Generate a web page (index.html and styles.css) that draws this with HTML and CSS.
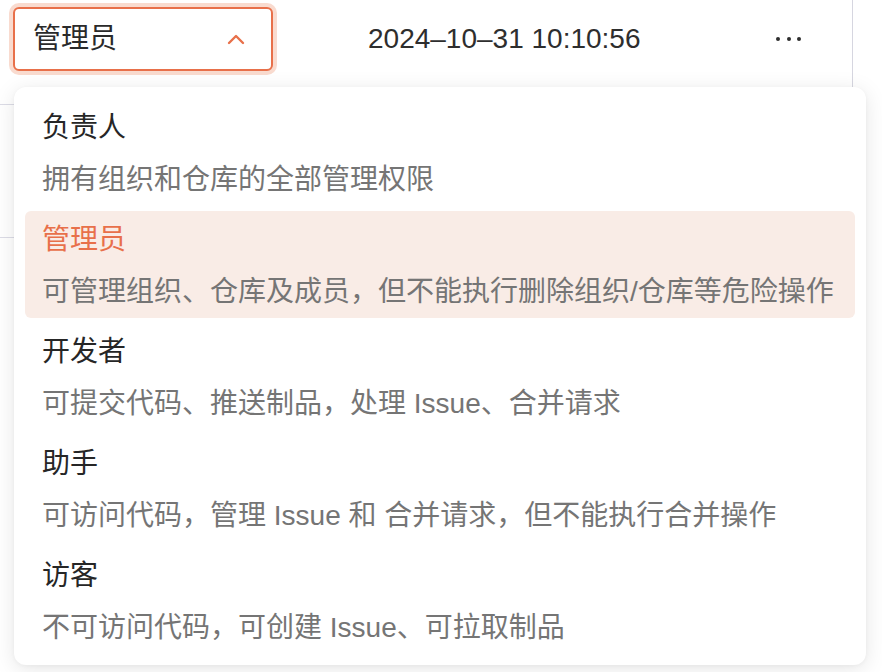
FILE: index.html
```html
<!DOCTYPE html>
<html lang="zh-CN">
<head>
<meta charset="utf-8">
<title>角色选择</title>
<link rel="stylesheet" href="styles.css">
</head>
<body>
<div class="page">
  <div class="table">
    <div class="row row-main">
      <div class="cell cell-role">
        <div class="select is-open">
          <span class="select-value">管理员</span>
          <svg class="chevron" width="18" height="12" viewBox="0 0 18 12" aria-hidden="true">
            <path d="M2 10 L9 3 L16 10" fill="none" stroke="#e8704a" stroke-width="2.4" stroke-linecap="round" stroke-linejoin="round"/>
          </svg>
        </div>
      </div>
      <div class="cell cell-date">2024–10–31 10:10:56</div>
      <div class="cell cell-more">
        <span class="dots"><i></i><i></i><i></i></span>
      </div>
    </div>
    <div class="row row-second"></div>
    <div class="row row-third"></div>
  </div>

  <div class="dropdown">
    <div class="option">
      <div class="option-title">负责人</div>
      <div class="option-desc">拥有组织和仓库的全部管理权限</div>
    </div>
    <div class="option is-selected">
      <div class="option-title">管理员</div>
      <div class="option-desc">可管理组织、仓库及成员，但不能执行删除组织/仓库等危险操作</div>
    </div>
    <div class="option">
      <div class="option-title">开发者</div>
      <div class="option-desc">可提交代码、推送制品，处理 Issue、合并请求</div>
    </div>
    <div class="option">
      <div class="option-title">助手</div>
      <div class="option-desc">可访问代码，管理 Issue 和 合并请求，但不能执行合并操作</div>
    </div>
    <div class="option">
      <div class="option-title">访客</div>
      <div class="option-desc">不可访问代码，可创建 Issue、可拉取制品</div>
    </div>
  </div>
</div>
</body>
</html>
```
FILE: styles.css
```css
* {
  box-sizing: border-box;
}

html, body {
  margin: 0;
  padding: 0;
  background: #ffffff;
}

body {
  font-family: "Liberation Sans", "Noto Sans CJK SC", sans-serif;
  color: #2a2a2a;
  width: 882px;
  height: 672px;
  overflow: hidden;
}

.page {
  position: relative;
  width: 882px;
  height: 672px;
}

.table {
  width: 853px;
  display: flex;
  flex-direction: column;
}

.row {
  display: flex;
  border-bottom: 1px solid #dcdce6;
}

.row-main {
  height: 105px;
}

.row-second {
  height: 133px;
}

.row-third {
  height: 200px;
  border-bottom: none;
}

.cell-role {
  width: 284px;
  padding: 7px 0 0 13px;
}

.select {
  width: 260px;
  height: 64px;
  border: 2px solid #e8704a;
  border-radius: 6px;
  box-shadow: 0 0 0 4px #f9dbcf;
  display: flex;
  align-items: center;
  justify-content: space-between;
  padding: 0 26px 0 18px;
  background: #fff;
}

.select-value {
  font-size: 28px;
  line-height: 40px;
  color: #2a2a2a;
}

.chevron {
  display: block;
}

.cell-date {
  width: 460px;
  padding: 19px 0 0 84px;
  font-size: 28px;
  line-height: 40px;
  color: #2e2e2e;
}

.cell-more {
  flex: 1;
  height: 87px;
  padding: 37px 0 0 32px;
  border-right: 1.5px solid #d6d6e0;
}

.dots {
  display: flex;
  gap: 6.5px;
}

.dots i {
  display: block;
  width: 4px;
  height: 4px;
  border-radius: 50%;
  background: #2e2e2e;
}

.dropdown {
  position: absolute;
  left: 14px;
  top: 87px;
  width: 852px;
  height: 578px;
  background: #ffffff;
  border-radius: 12px;
  box-shadow: 0 4px 22px rgba(0, 0, 0, 0.10), 0 1px 4px rgba(0, 0, 0, 0.04);
  padding: 12px 11px 11px;
  display: flex;
  flex-direction: column;
  gap: 5px;
}

.option {
  height: 107px;
  border-radius: 6px;
  padding: 9px 17px 0;
}

.option.is-selected {
  background: #f9ece6;
}

.option-title {
  font-size: 28px;
  line-height: 40px;
  color: #262626;
}

.is-selected .option-title {
  color: #e8704a;
}

.option-desc {
  margin-top: 12px;
  font-size: 28px;
  line-height: 40px;
  color: #757575;
  white-space: nowrap;
}
```
